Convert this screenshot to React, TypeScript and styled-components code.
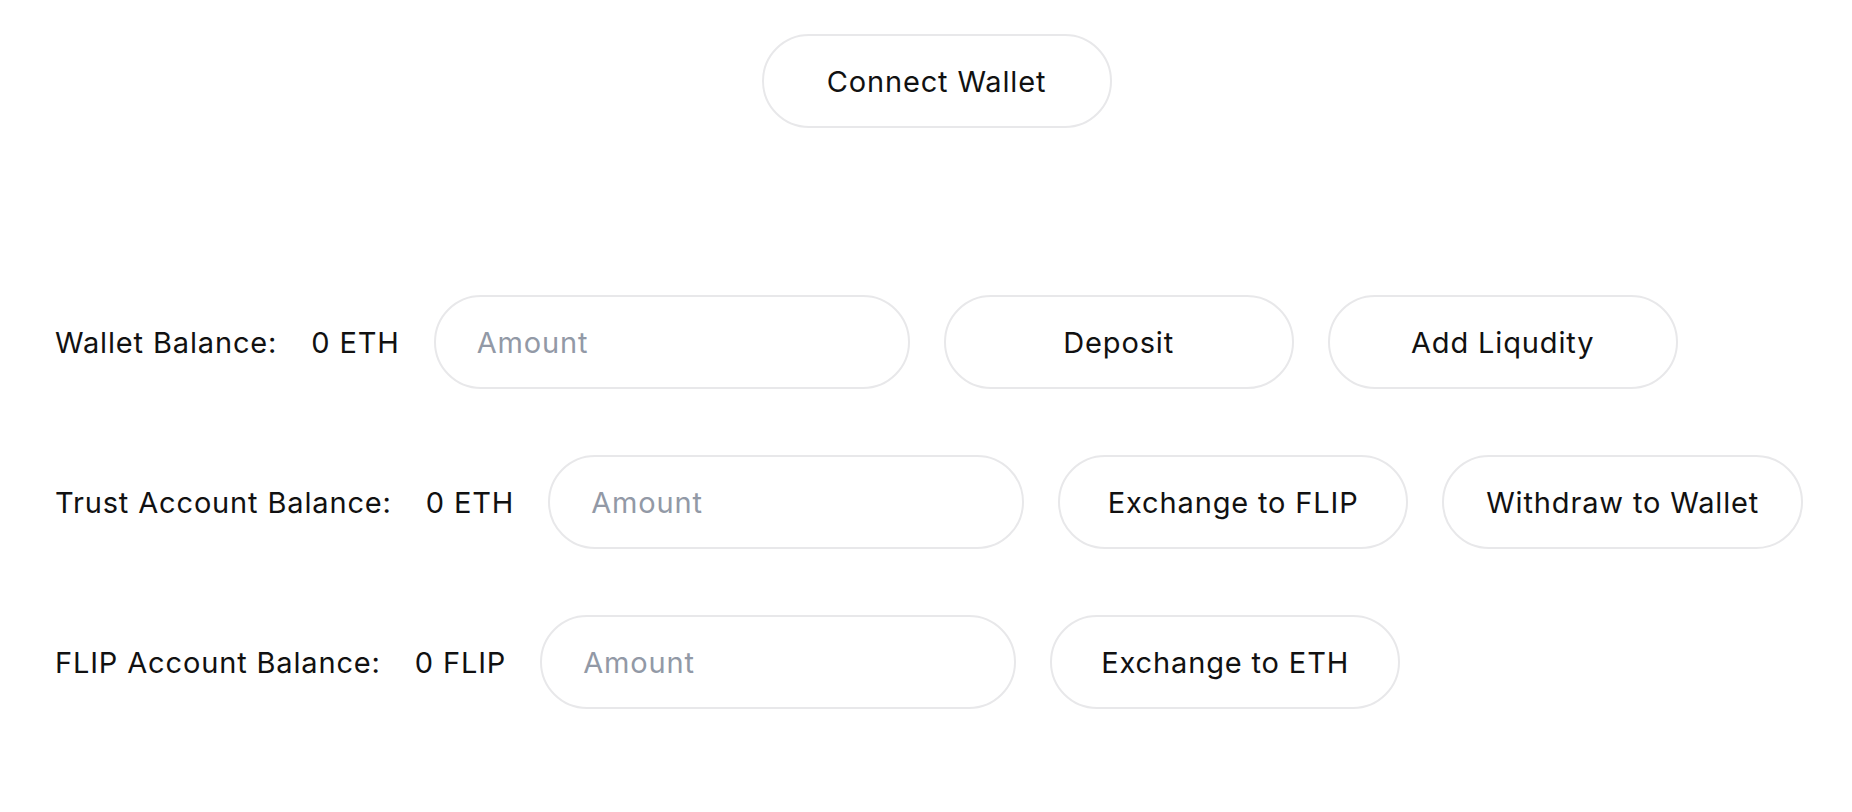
import React from "react";
import styled, { createGlobalStyle } from "styled-components";

const Global = createGlobalStyle`
  html, body { margin: 0; padding: 0; background: #ffffff; }
  body { font-family: Inter, "Noto Sans", sans-serif; color: #111111; }
  * { box-sizing: border-box; }
`;

const Page = styled.div`
  display: flex;
  flex-direction: column;
  padding: 34px 0 0 0;
`;

const Header = styled.header`
  display: flex;
  justify-content: center;
  padding-left: 21px;
`;

const Rows = styled.main`
  display: flex;
  flex-direction: column;
  gap: 66px;
  margin-top: 167px;
  padding-left: 55px;
`;

const Row = styled.div`
  display: flex;
  align-items: center;
  gap: 34px;
`;

const Label = styled.span`
  font-size: 29px;
  letter-spacing: 0.85px;
  line-height: 1;
  white-space: nowrap;
  color: #111111;
`;

const Pill = styled.button`
  height: 94px;
  min-width: 350px;
  padding: 0 42px;
  border: 2px solid #e8e8ea;
  border-radius: 999px;
  background: #ffffff;
  font-family: Inter, "Noto Sans", sans-serif;
  font-size: 29px;
  letter-spacing: 0.85px;
  color: #111111;
  white-space: nowrap;
  cursor: pointer;
`;

const AmountInput = styled.input`
  width: 476px;
  height: 94px;
  padding: 0 35px 0 41px;
  border: 2px solid #e8e8ea;
  border-radius: 999px;
  background: #ffffff;
  font-family: Inter, "Noto Sans", sans-serif;
  font-size: 29px;
  letter-spacing: 0.85px;
  color: #111111;
  outline: none;
  &::placeholder { color: #9299a6; }
`;

type RowData = { label: string; value: string; actions: string[] };

const rows: RowData[] = [
  { label: "Wallet Balance:", value: "0 ETH", actions: ["Deposit", "Add Liqudity"] },
  { label: "Trust Account Balance:", value: "0 ETH", actions: ["Exchange to FLIP", "Withdraw to Wallet"] },
  { label: "FLIP Account Balance:", value: "0 FLIP", actions: ["Exchange to ETH"] },
];

export default function App() {
  return (
    <>
      <Global />
      <Page>
        <Header>
          <Pill>Connect Wallet</Pill>
        </Header>
        <Rows>
          {rows.map((r) => (
            <Row key={r.label}>
              <Label>{r.label}</Label>
              <Label>{r.value}</Label>
              <AmountInput placeholder="Amount" />
              {r.actions.map((a) => (
                <Pill key={a}>{a}</Pill>
              ))}
            </Row>
          ))}
        </Rows>
      </Page>
    </>
  );
}
